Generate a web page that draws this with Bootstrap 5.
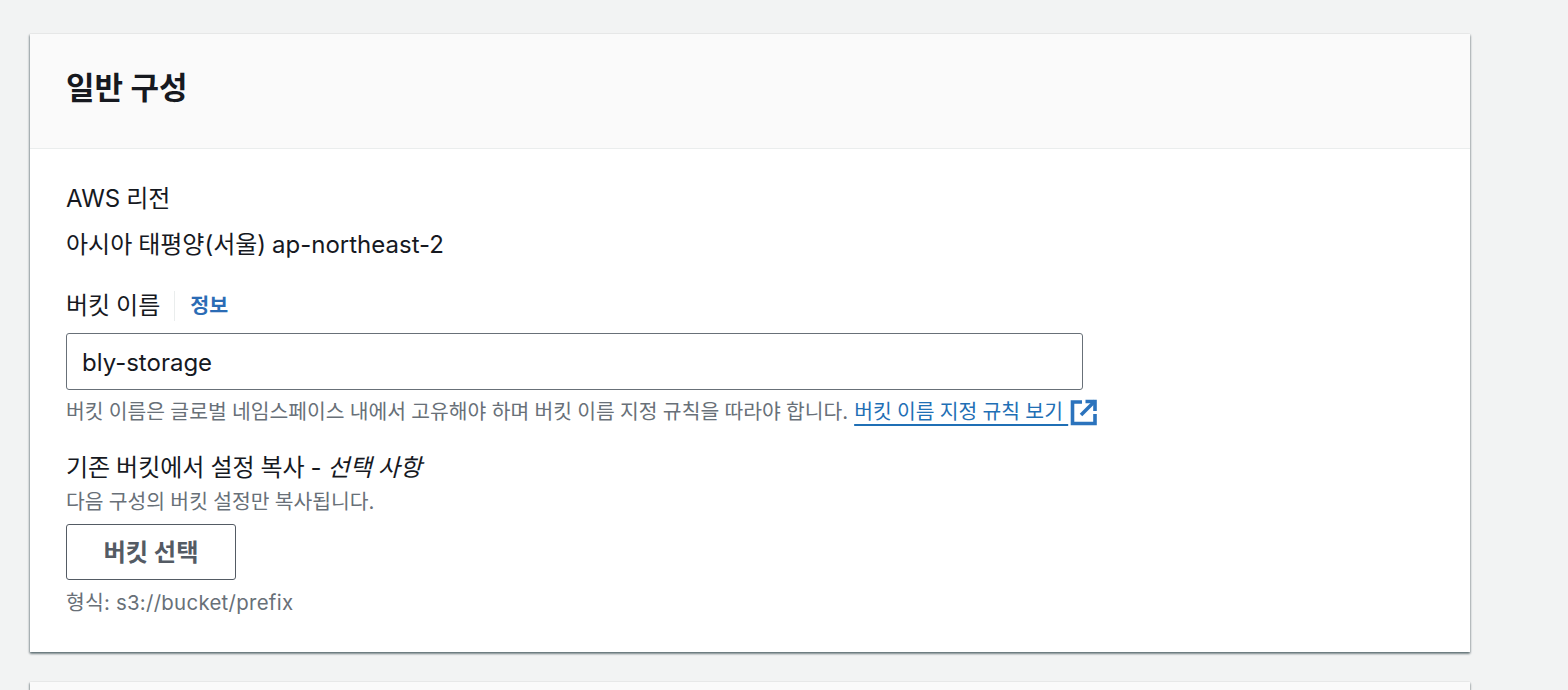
<!DOCTYPE html>
<html lang="ko">
<head>
<meta charset="utf-8">
<title>일반 구성</title>
<link href="https://cdn.jsdelivr.net/npm/bootstrap@5.3.0/dist/css/bootstrap.min.css" rel="stylesheet">
<style>
html,body{height:690px;overflow:hidden}
body{background:#f2f3f3;color:#16191f;font-family:Inter,"Noto Sans CJK KR",sans-serif;font-size:24px;line-height:30px;word-spacing:-.8px}
.page-wrap{padding:34px 98px 0 30px;display:flex;flex-direction:column;gap:30px}
.panel-box{background:#fff;box-shadow:0 2px 2px 0 rgba(0,28,36,.4),1px 1px 2px 0 rgba(0,28,36,.15),-1px 1px 2px 0 rgba(0,28,36,.25),0 0 1px 0 rgba(0,28,36,.15);height:618px;flex:none}
.panel-next{height:8px;overflow:hidden}
.panel-head{background:#fafafa;border-bottom:1px solid #eaeded;height:115px;padding:0 36px;display:flex;align-items:center}
.panel-title{font-size:31px;font-weight:700;margin:0;line-height:40px;position:relative;top:-3px;word-spacing:0}
.panel-body-area{padding:35px 36px 0}
.field-label{font-size:24px;line-height:30px;margin:0}
.field-value{margin-top:16px;line-height:30px}
.name-row{margin-top:31px;display:flex;align-items:center}
.info-sep{border-left:1px solid #eaeded;height:30px;margin:0 15px 0 14px}
.info-link{color:#2b6cb5;font-weight:700;font-size:20.6px;text-decoration:none}
.name-input{display:block;width:1017px;height:57px;margin-top:12px;border:1px solid #687078;border-radius:3px;padding:1px 15px 0;font-size:24px;color:#16191f;font-family:inherit}
.hint-text{color:#687078;font-size:20.4px;line-height:26px;margin:0;word-spacing:-.45px}
.hint-main{margin-top:8px;display:flex;align-items:center}
.hint-sub{margin-top:6px}
.hint-format{margin-top:10px;letter-spacing:.3px}
.doc-link{color:#1f6fb5;text-decoration:underline;text-underline-offset:5px;margin-left:6px;white-space:pre}
.copy-label{margin-top:27px}
.pick-btn{display:block;width:170px;height:56px;margin-top:9px;border:1px solid #545b64;border-radius:3px;background:#fff;color:#545b64;font-weight:700;font-size:24.3px;padding:0;line-height:1;font-family:inherit}
.pick-btn:hover{background:#fff;color:#545b64;border-color:#545b64}
.ext-icon{margin-left:2px;flex:none}
</style>
</head>
<body>
<div class="page-wrap">
  <section class="panel-box">
    <div class="panel-head"><h2 class="panel-title">일반 구성</h2></div>
    <div class="panel-body-area">
      <div class="field-label">AWS 리전</div>
      <div class="field-value">아시아 태평양(서울) ap-northeast-2</div>
      <div class="name-row">
        <label class="field-label" for="bucket">버킷 이름</label>
        <span class="info-sep"></span>
        <a class="info-link" href="#">정보</a>
      </div>
      <input id="bucket" class="name-input" type="text" value="bly-storage">
      <p class="hint-text hint-main">버킷 이름은 글로벌 네임스페이스 내에서 고유해야 하며 버킷 이름 지정 규칙을 따라야 합니다.<a class="doc-link" href="#">버킷 이름 지정 규칙 보기 </a>
        <svg class="ext-icon" width="28" height="28" viewBox="0 0 28 28" fill="none" stroke="#2b73bd" stroke-width="3.6"><path d="M12 4H2.5v21.5H25V16"/><path d="M11 17 25 3"/><path d="M15.5 3.5H25V13"/></svg>
      </p>
      <div class="field-label copy-label">기존 버킷에서 설정 복사 - <em>선택 사항</em></div>
      <p class="hint-text hint-sub">다음 구성의 버킷 설정만 복사됩니다.</p>
      <button type="button" class="btn pick-btn">버킷 선택</button>
      <p class="hint-text hint-format">형식: s3://bucket/prefix</p>
    </div>
  </section>
  <section class="panel-box panel-next"><div class="panel-head"></div></section>
</div>
</body>
</html>
